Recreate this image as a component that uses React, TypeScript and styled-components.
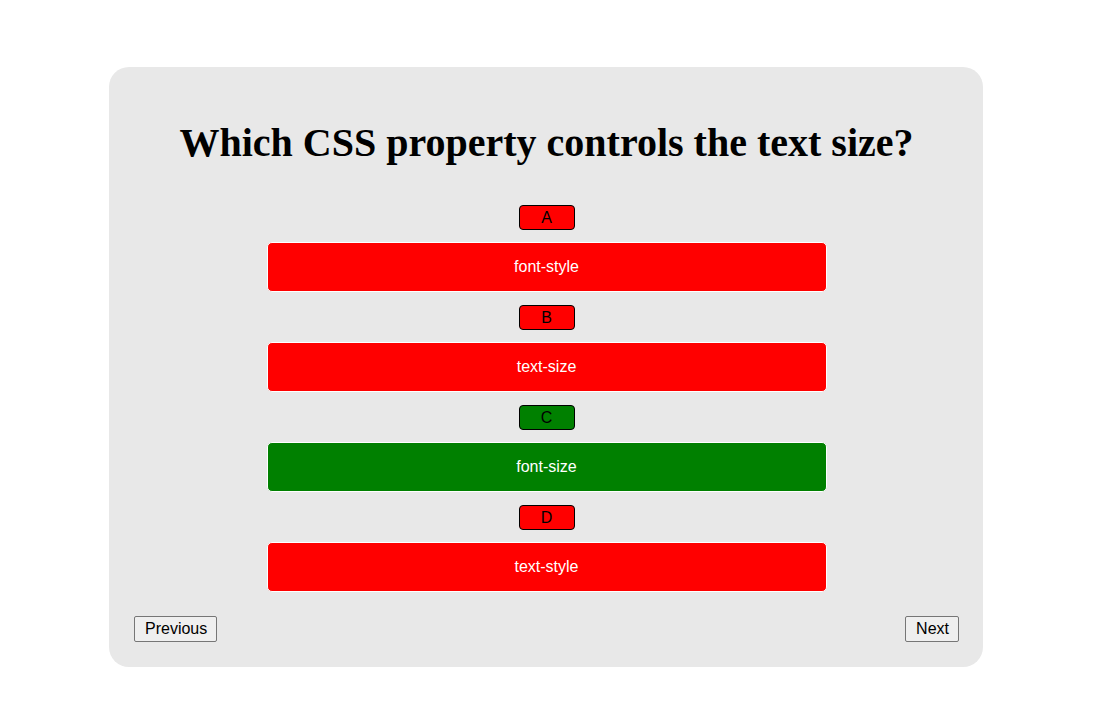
import React, { useState } from "react";
import styled, { createGlobalStyle } from "styled-components";

const Global = createGlobalStyle`
  html, body { margin: 0; padding: 0; background: #ffffff; }
  body { font-family: "Liberation Sans", Arial, sans-serif; }
`;

const Page = styled.div`
  padding: 67px 0 0 109px;
`;

const Card = styled.div`
  width: 874px;
  height: 600px;
  box-sizing: border-box;
  background: #e8e8e8;
  border-radius: 20px;
  padding: 25px 24px 25px 25px;
  display: flex;
  flex-direction: column;
  align-items: center;
`;

const Title = styled.h1`
  margin: 28px 0 39px;
  font-family: "Liberation Serif", "Times New Roman", serif;
  font-weight: bold;
  font-size: 40px;
  line-height: 46px;
  color: #000;
  text-align: center;
`;

const Options = styled.div`
  display: flex;
  flex-direction: column;
  align-items: center;
  width: 560px;
`;

const Badge = styled.div<{ $correct: boolean }>`
  width: 56px;
  height: 25px;
  margin-bottom: 12px;
  box-sizing: border-box;
  border: 1px solid #000;
  border-radius: 4px;
  background: ${(p) => (p.$correct ? "#008000" : "#ff0000")};
  color: #000;
  font-size: 16px;
  line-height: 23px;
  text-align: center;
`;

const OptionButton = styled.button<{ $correct: boolean }>`
  width: 560px;
  height: 50px;
  margin-bottom: 13px;
  box-sizing: border-box;
  border: 1px solid #ffffff;
  border-radius: 5px;
  background: ${(p) => (p.$correct ? "#008000" : "#ff0000")};
  color: #ffffff;
  font-family: "Liberation Sans", Arial, sans-serif;
  font-size: 16px;
  cursor: pointer;
  &:last-child {
    margin-bottom: 0;
  }
`;

const Footer = styled.div`
  margin-top: auto;
  align-self: stretch;
  display: flex;
  justify-content: space-between;
  align-items: flex-end;
`;

const NavButton = styled.button`
  font-family: "Liberation Sans", Arial, sans-serif;
  font-size: 16px;
  height: 26px;
  padding: 1px 9px 1px 10px;
  background: #efefef;
  color: #000;
  border: 1px solid #767676;
  border-radius: 2px;
  cursor: pointer;
`;

const options = [
  { letter: "A", text: "font-style", correct: false },
  { letter: "B", text: "text-size", correct: false },
  { letter: "C", text: "font-size", correct: true },
  { letter: "D", text: "text-style", correct: false },
];

export default function App() {
  const [, setSel] = useState<string | null>(null);
  return (
    <>
      <Global />
      <Page>
        <Card>
          <Title>Which CSS property controls the text size?</Title>
          <Options>
            {options.map((o) => (
              <React.Fragment key={o.letter}>
                <Badge $correct={o.correct}>{o.letter}</Badge>
                <OptionButton $correct={o.correct} onClick={() => setSel(o.letter)}>
                  {o.text}
                </OptionButton>
              </React.Fragment>
            ))}
          </Options>
          <Footer>
            <NavButton>Previous</NavButton>
            <NavButton>Next</NavButton>
          </Footer>
        </Card>
      </Page>
    </>
  );
}
